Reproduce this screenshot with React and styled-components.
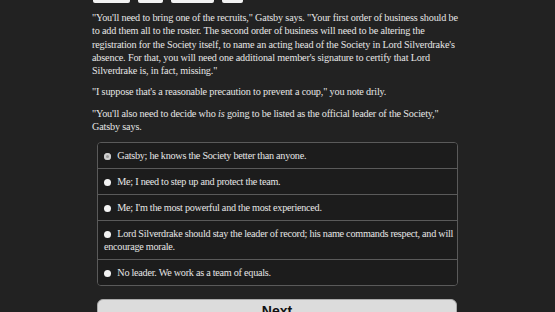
import React from 'react';
import styled, { createGlobalStyle } from 'styled-components';

const Global = createGlobalStyle`
  html, body {
    margin: 0;
    padding: 0;
    background: #222222;
  }
  body {
    font-family: "Liberation Serif", "Times New Roman", serif;
    color: #e6e6e6;
  }
`;

const Page = styled.div`
  width: 372px;
  margin: 0 auto;
  padding-left: 1px;
`;

const TopBar = styled.div`
  display: flex;
  gap: 8px;
  margin-bottom: 8px;
  padding-left: 1px;
`;

const TopButton = styled.div`
  width: ${(p) => p.w}px;
  height: 3px;
  background: #f2f2f2;
  border-radius: 0 0 2px 2px;
`;

const Para = styled.p`
  margin: 0 0 8px;
  font-size: 10.2px;
  letter-spacing: -0.16px;
  line-height: 13.25px;
`;

const Choices = styled.div`
  margin: 9px 6px 0 5px;
  border: 1px solid #5a5a5a;
  border-radius: 4px;
  overflow: hidden;
`;

const Choice = styled.label`
  display: block;
  padding: 6px 2px 6px 6px;
  font-size: 10.2px;
  letter-spacing: -0.26px;
  line-height: 13px;
  background: #1c1c1c;
  border-top: ${(p) => (p.first ? 'none' : '1px solid #5a5a5a')};
`;

const Radio = styled.span`
  display: inline-block;
  width: 7px;
  height: 7px;
  border-radius: 50%;
  margin-right: 4px;
  vertical-align: -0.5px;
  background: ${(p) => (p.checked ? '#9a9a9a' : '#f4f4f4')};
  box-shadow: ${(p) => (p.checked ? 'inset 0 0 0 2px #cfcfcf' : 'none')};
`;

const NextButton = styled.button`
  display: block;
  width: 360px;
  height: 30px;
  margin: 13px 0 0 5px;
  border: 1px solid #aaa;
  border-radius: 6px;
  background: #dcdcdc;
  color: #111;
  font-family: "Liberation Sans", Arial, sans-serif;
  font-size: 14px;
  font-weight: bold;
  padding: 0 0 6px;
  line-height: 20px;
`;

const options = [
  'Gatsby; he knows the Society better than anyone.',
  'Me; I need to step up and protect the team.',
  "Me; I'm the most powerful and the most experienced.",
  'Lord Silverdrake should stay the leader of record; his name commands respect, and will encourage morale.',
  'No leader. We work as a team of equals.',
];

export default function App() {
  return (
    <Page>
      <Global />
      <TopBar>
        <TopButton w={37} />
        <TopButton w={25} />
        <TopButton w={43} />
        <TopButton w={21} />
      </TopBar>
      <Para>
        "You'll need to bring one of the recruits," Gatsby says. "Your first order of business should be
        to add them all to the roster. The second order of business will need to be altering the
        registration for the Society itself, to name an acting head of the Society in Lord Silverdrake's
        absence. For that, you will need one additional member's signature to certify that Lord
        Silverdrake is, in fact, missing."
      </Para>
      <Para>"I suppose that's a reasonable precaution to prevent a coup," you note drily.</Para>
      <Para>
        "You'll also need to decide who <i>is</i> going to be listed as the official leader of the Society,"
        Gatsby says.
      </Para>
      <Choices>
        {options.map((o, i) => (
          <Choice key={i} first={i === 0}>
            <Radio checked={i === 0} /> {o}
          </Choice>
        ))}
      </Choices>
      <NextButton>Next</NextButton>
    </Page>
  );
}
